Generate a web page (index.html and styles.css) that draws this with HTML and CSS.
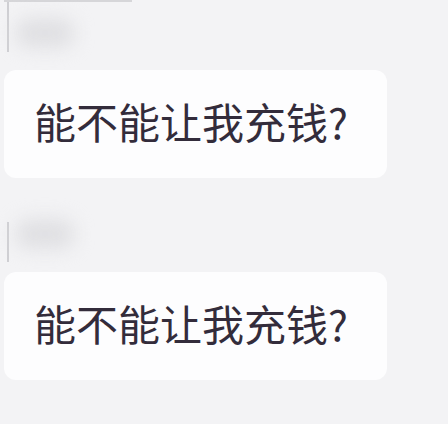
FILE: index.html
```html
<!DOCTYPE html>
<html>

<head>
    <meta charset="utf-8">
    <title>聊天</title>
    <link rel="stylesheet" href="styles.css">
</head>

<body>
    <div class="chat">
        <div class="msg msg-first">
            <div class="sender">
                <span class="edge"></span>
                <span class="name"></span>
            </div>
            <div class="bubble">能不能让我充钱?</div>
        </div>
        <div class="msg">
            <div class="sender">
                <span class="edge edge-short"></span>
                <span class="name"></span>
            </div>
            <div class="bubble">能不能让我充钱?</div>
        </div>
    </div>
</body>

</html>
```

FILE: styles.css
```css
* {
    margin: 0;
    padding: 0;
    box-sizing: border-box;
}

body {
    width: 448px;
    height: 424px;
    overflow: hidden;
    background-color: #f3f3f5;
    font-family: "Noto Sans CJK SC", "Noto Sans", sans-serif;
}

.chat {
    display: flex;
    flex-direction: column;
    gap: 24px;
    padding: 0 0 0 4px;
}

.msg {
    display: flex;
    flex-direction: column;
}

.sender {
    height: 70px;
    display: flex;
    align-items: center;
    gap: 6px;
    padding-left: 3px;
}

.msg-first .sender {
    border-top: 2px solid #d6d6d9;
    width: 128px;
}

.edge {
    width: 2px;
    height: 50px;
    align-self: flex-start;
    background-color: #cfcfd3;
}

.edge-short {
    height: 40px;
    margin-top: 20px;
}

.name {
    width: 60px;
    height: 30px;
    margin-top: -6px;
    border-radius: 15px;
    background-color: #e0e0e3;
    filter: blur(9px);
}

.bubble {
    width: 383px;
    height: 108px;
    display: flex;
    align-items: center;
    padding: 0 0 6px 30px;
    border-radius: 12px;
    background-color: #fdfdfe;
    color: #332c3b;
    font-size: 42px;
    line-height: 1;
}
```
